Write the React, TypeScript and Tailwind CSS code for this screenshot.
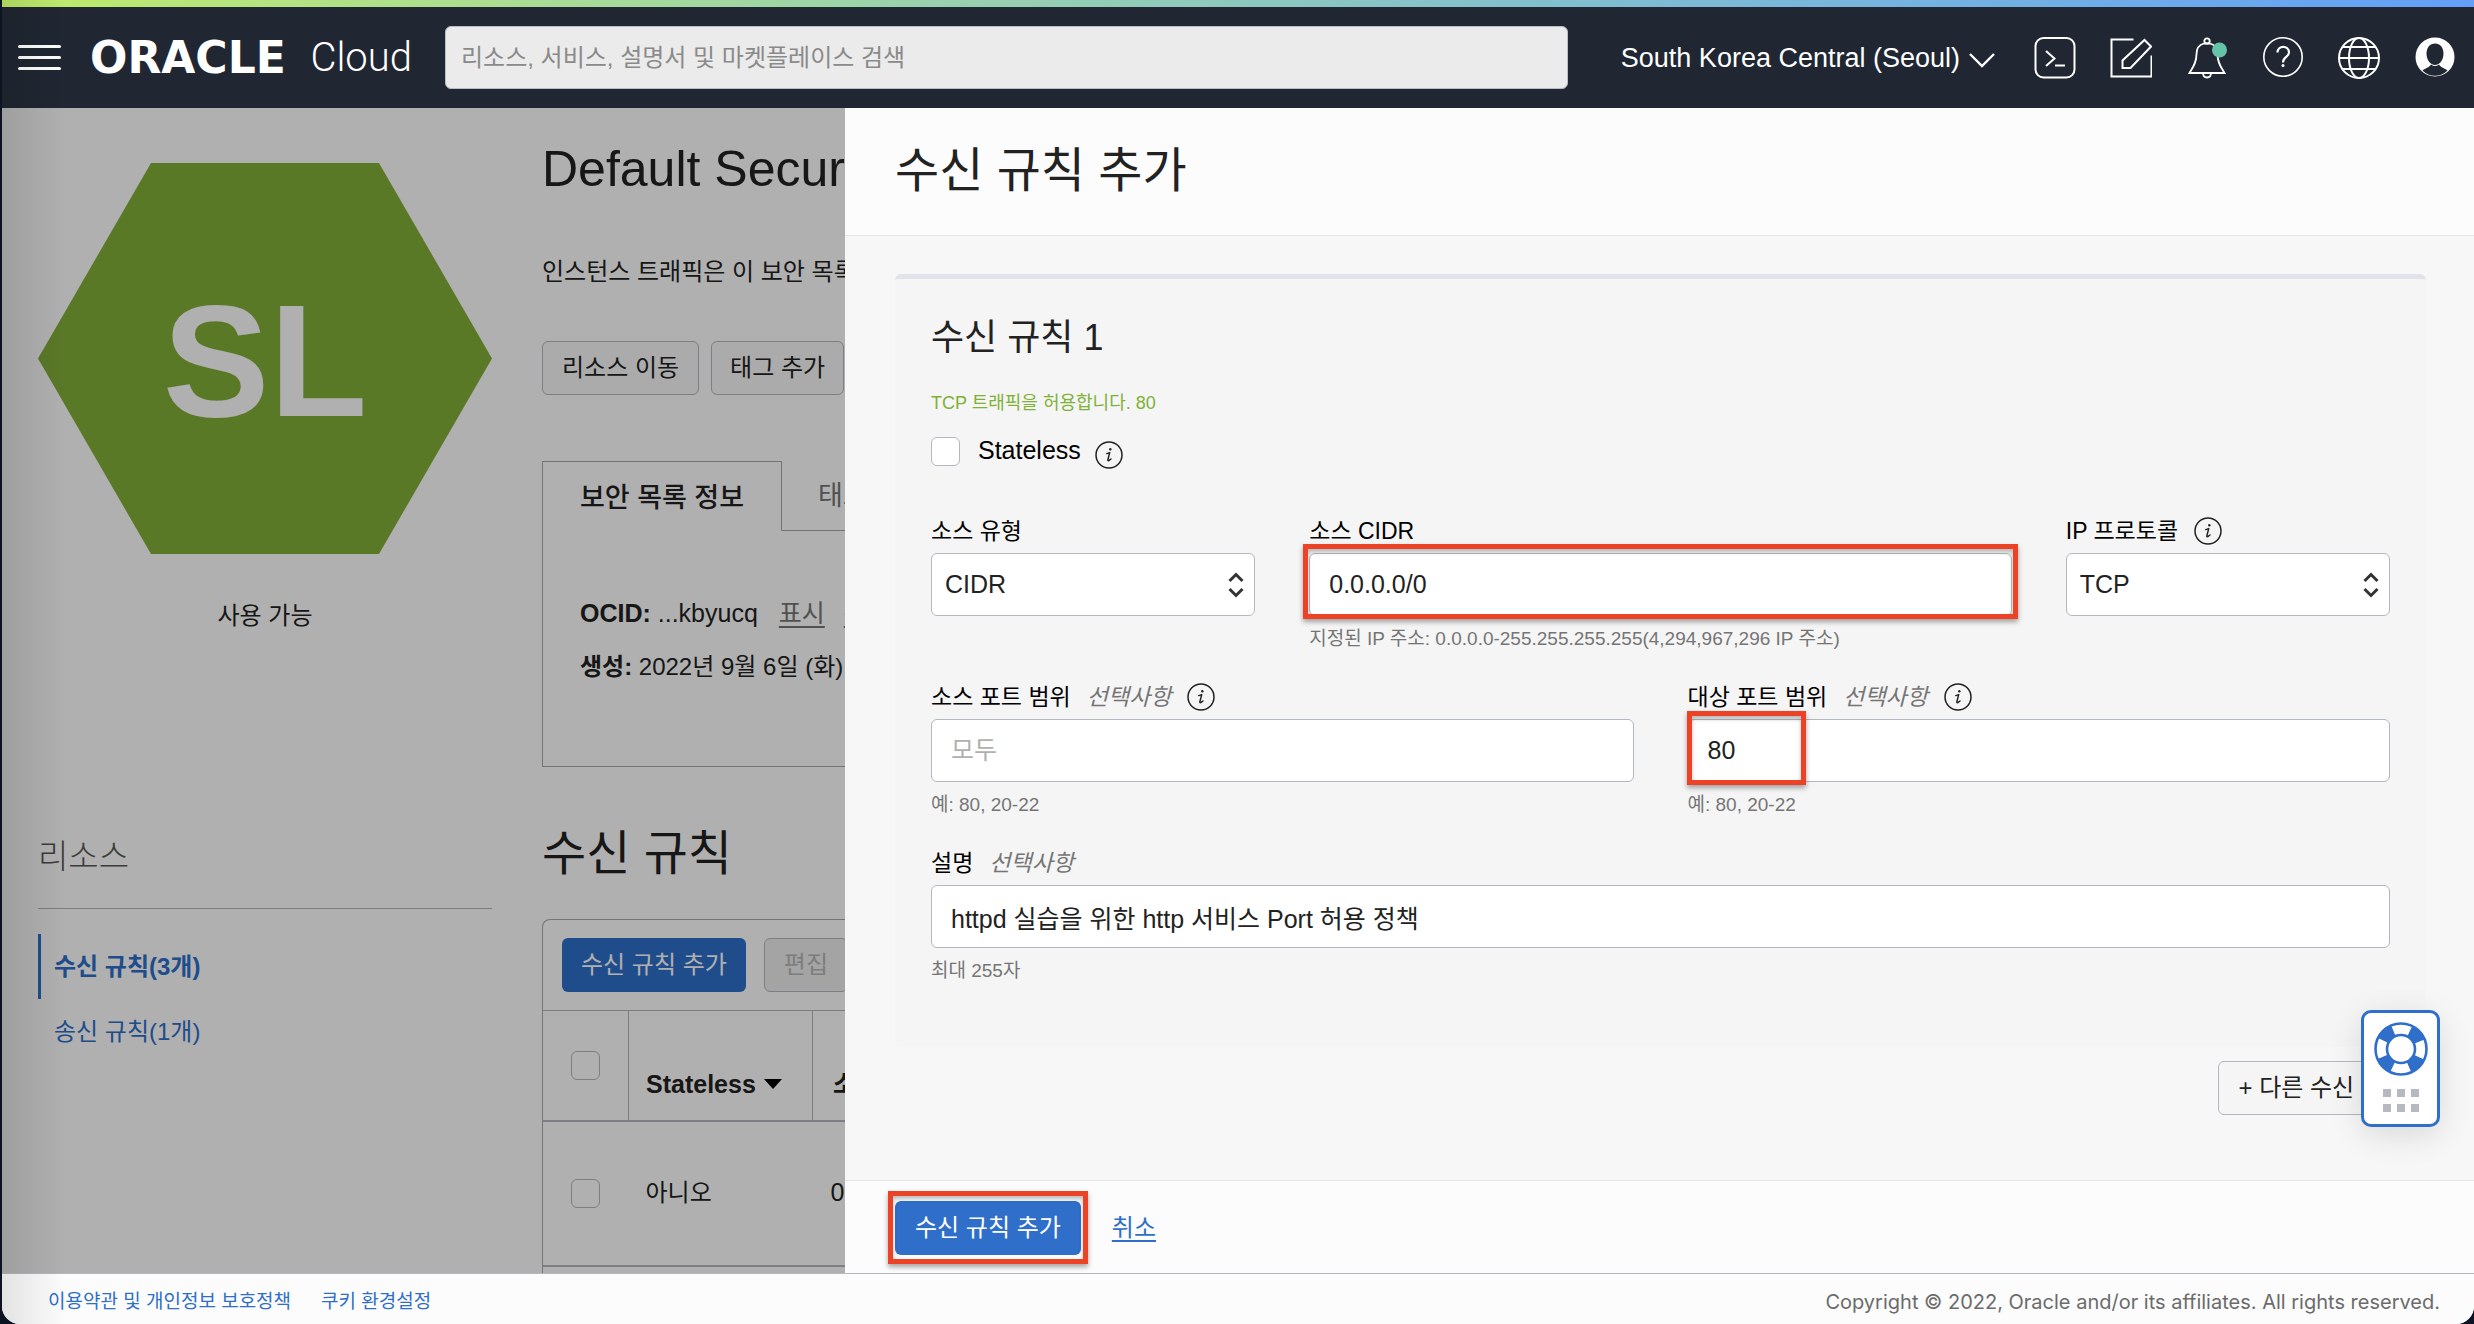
import React from "react";

function InfoButton({ label }: { label: string }) {
  return (
    <button type="button" aria-label={label} className="grid size-7 shrink-0 place-items-center rounded-full">
      <svg viewBox="0 0 28 28" className="size-7" fill="none" stroke="#222" aria-hidden="true">
        <circle cx="14" cy="14" r="13" strokeWidth="1.5" />
        <path d="M11.800 12.600 14.700 11.600 12.900 18.600Q12.600 20 13.800 19.600L16 18" strokeWidth="1.500" strokeLinecap="round" strokeLinejoin="round" />
        <circle cx="15.300" cy="8.200" r="1.200" fill="#222" stroke="none" />
      </svg>
    </button>
  );
}

function Highlight({ className }: { className: string }) {
  return (
    <span
      aria-hidden="true"
      className={
        "pointer-events-none absolute border-[5px] border-[#ec4226] shadow-[0_3px_5px_rgba(0,0,0,0.35),inset_0_3px_4px_rgba(0,0,0,0.25)] " +
        className
      }
    />
  );
}

function FieldLabel({ id, text, optional, info }: { id: string; text: string; optional?: boolean; info?: boolean }) {
  return (
    <div className="flex h-8 items-center gap-4 text-[23px] leading-8 whitespace-nowrap">
      <label htmlFor={id} className="flex gap-4 text-black">
        {text}
        {optional && <em className="text-[#757575]">선택사항</em>}
      </label>
      {info && <InfoButton label={text + " 정보"} />}
    </div>
  );
}

const inputClass =
  "h-[63px] w-full rounded-md border border-[#b3b7bf] bg-white px-[19px] text-[25px] text-[#222] placeholder:text-[#b0b0b0]";

function SelectBox({ id, value }: { id: string; value: string }) {
  return (
    <div className="relative mt-1.5">
      <select id={id} defaultValue={value} className="h-[63px] w-full appearance-none rounded-md border border-[#b3b7bf] bg-white px-[13px] text-[25px] text-[#222]">
        <option>{value}</option>
      </select>
      <svg viewBox="0 0 18 28" className="pointer-events-none absolute top-[18px] right-2.5 h-7 w-[18px]" fill="none" stroke="#333" strokeWidth="3" aria-hidden="true">
        <path d="M2.500 10 9 3.500l6.500 6.500M2.500 18l6.500 6.500 6.500-6.500" />
      </svg>
    </div>
  );
}

function Hint({ children }: { children: React.ReactNode }) {
  return <p className="mt-[11px] text-[19px] leading-6 whitespace-nowrap text-[#757575]">{children}</p>;
}

function Header() {
  return (
    <header>
      <div className="h-[7px] bg-linear-to-r from-[#bfea68] to-[#639ff7]" />
      <div className="flex h-[101px] items-center bg-[#202732] pr-[18px] pl-4 text-white">
        <button type="button" aria-label="메뉴" className="flex w-[43px] flex-col gap-2">
          <span className="h-[3px] rounded-full bg-white" />
          <span className="h-[3px] rounded-full bg-white" />
          <span className="h-[3px] rounded-full bg-white" />
        </button>
        <a href="#home" className="ml-[29px] flex w-[322px] items-center justify-between leading-[50px] whitespace-nowrap">
          <span className="font-['DejaVu_Sans'] text-[44px] font-bold">ORACLE</span>
          <span className="font-[Roboto] text-[40px] font-light">Cloud</span>
        </a>
        <input
          type="search"
          aria-label="검색"
          placeholder="리소스, 서비스, 설명서 및 마켓플레이스 검색"
          className="ml-[33px] h-[63px] min-w-0 flex-1 rounded-md border border-[#b9bdc4] bg-[#ebebeb] px-[15px] text-[24px] text-[#222] placeholder:text-[#8a8a8a]"
        />
        <button type="button" className="ml-[53px] flex items-center gap-2 text-[27px] leading-8 whitespace-nowrap">
          South Korea Central (Seoul)
          <svg viewBox="0 0 28 18" className="mt-1 h-[18px] w-7" fill="none" stroke="currentColor" strokeWidth="2.4" aria-hidden="true">
            <path d="m2 3 12 12L26 3" />
          </svg>
        </button>
        <div className="ml-[38px] flex gap-[34px]">
          <button type="button" aria-label="Cloud Shell">
            <svg viewBox="0 0 42 42" className="size-[42px]" fill="none" stroke="currentColor" strokeWidth="2">
              <rect x="1.500" y="1" width="39" height="39.500" rx="8" />
              <path d="m12 14 8.500 7.500L12 29M21 28.500h10" />
            </svg>
          </button>
          <button type="button" aria-label="편집">
            <svg viewBox="0 0 42 42" className="size-[42px]" fill="none" stroke="currentColor" strokeWidth="2">
              <path d="M23.500 2.500H1.500v37h40V18.500" />
              <path d="m34.500 3 6.500 6.500L20.500 31h-8v-7.500Z" />
            </svg>
          </button>
          <button type="button" aria-label="알림">
            <svg viewBox="0 0 42 42" className="size-[42px]" fill="none" stroke="currentColor" strokeWidth="1.800">
              <circle cx="21" cy="4" r="2.700" />
              <path d="M18 6.500C12.500 8 10.500 12 10.500 17c0 9-3.500 13-7 19h35c-3.500-6-7-10-7-19 0-5-2-9-7.500-10.500ZM17 36c0 6 8 6 8 0" />
              <circle cx="33.500" cy="13" r="7.500" fill="#65c3aa" stroke="none" />
            </svg>
          </button>
          <button type="button" aria-label="도움말">
            <svg viewBox="0 0 42 42" className="size-[42px]" fill="none" stroke="currentColor" strokeWidth="1.600">
              <circle cx="21" cy="20" r="19.200" />
              <path d="M15.500 15.500c0-7.500 11.500-7.500 11.500 0 0 4.500-6 4.500-6 10" strokeWidth="2.200" />
              <circle cx="21" cy="28.600" r="1.500" fill="currentColor" stroke="none" />
            </svg>
          </button>
          <button type="button" aria-label="언어">
            <svg viewBox="0 0 42 42" className="size-[42px]" fill="none" stroke="currentColor" strokeWidth="2">
              <circle cx="21" cy="21" r="20" />
              <ellipse cx="21" cy="21" rx="10" ry="20" />
              <path d="M1 21h40M4.500 10h33M4.500 32h33" />
            </svg>
          </button>
          <button type="button" aria-label="프로파일">
            <svg viewBox="0 0 42 42" className="size-[42px]" aria-hidden="true">
              <circle cx="21" cy="20" r="19.500" fill="#fff" />
              <path d="M21 6.500c5 0 8.500 4 8.500 10 0 7-4.500 11.500-8.500 11.500s-8.500-4.500-8.500-11.500c0-6 3.500-10 8.500-10Z" fill="#202732" />
              <path d="M8.500 33.500c2-2 6-2.500 8.500-6q4 3 8 0c2.500 3.500 6.500 4 8.500 6-6.500 7-18.500 7-25 0Z" fill="#202732" />
            </svg>
          </button>
        </div>
      </div>
    </header>
  );
}

function Sidebar() {
  return (
    <aside className="w-[454px] shrink-0">
      <svg viewBox="0 0 454 391" className="mt-[55px] w-full" role="img" aria-label="SL">
        <path d="M113 0h228l113 195.500L341 391H113L0 195.500Z" fill="#82ae39" />
        <text x="227" y="253" textAnchor="middle" fontSize="160" fontWeight="700" fill="#fcfcfc">
          SL
        </text>
      </svg>
      <p className="mt-[46px] text-center text-[24px] leading-8">사용 가능</p>
      <h2 className="mt-[201px] border-b border-[#b4b4b4] pb-[27px] text-[33px] leading-[48px] font-light text-[#555]">리소스</h2>
      <nav className="mt-[25px] text-[24px] leading-[65px] text-[#2d6ec8]">
        <a href="#ingress" className="block border-l-[3px] border-[#2d6ec8] pl-[13px] font-bold">
          수신 규칙(3개)
        </a>
        <a href="#egress" className="block pl-4">
          송신 규칙(1개)
        </a>
      </nav>
    </aside>
  );
}

const cellCheckbox = "block size-[29px] appearance-none rounded-md border border-[#b3b7bb]";

function Details() {
  return (
    <section className="flex flex-1 flex-col whitespace-nowrap">
      <h1 className="mt-[31px] text-[50px] leading-[60px]">Default Security</h1>
      <p className="mt-[57px] text-[24px] leading-8">인스턴스 트래픽은 이 보안 목록의</p>
      <div className="mt-[53px] flex gap-3 text-[24px]">
        <button type="button" className="h-[54px] rounded-md border border-[#b3b7bf] bg-[#f5f5f5] px-[19px]">
          리소스 이동
        </button>
        <button type="button" className="h-[54px] rounded-md border border-[#b3b7bf] bg-[#f5f5f5] px-[18px]">
          태그 추가
        </button>
      </div>

      <div className="mt-[66px] flex h-[70px] text-[27px] leading-[72px]" role="tablist">
        <button type="button" role="tab" aria-selected="true" className="border-x border-t border-[#a8a8a8] px-[37px] font-medium">
          보안 목록 정보
        </button>
        <button type="button" role="tab" aria-selected="false" className="flex-1 border-b border-[#a8a8a8] pl-9 text-left leading-[64px] text-[#757575]">
          태그
        </button>
      </div>
      <div className="flex h-[236px] flex-col gap-[22px] border-b border-l border-[#a8a8a8] pt-[66px] pl-[37px] text-[25px] leading-8">
        <p>
          <b>OCID:</b> ...kbyucq{" "}
          <a href="#show" className="ml-3.5 text-[#757575] underline underline-offset-4">
            표시
          </a>{" "}
          <a href="#copy" className="ml-3 text-[#757575] underline underline-offset-4">
            복사
          </a>
        </p>
        <p className="text-[24px]">
          <b>생성:</b> 2022년 9월 6일 (화)
        </p>
      </div>

      <h2 className="mt-[57px] text-[48px] leading-[60px]">수신 규칙</h2>
      <div className="mt-[35px] flex-1 rounded-tl-lg border-t border-l border-[#a8a8a8]">
        <div className="flex gap-[18px] px-[19px] py-[18px] text-[24px]">
          <button type="button" className="h-[54px] rounded-md bg-[#2d6ec8] px-[19px] text-[#fcfcfc]">
            수신 규칙 추가
          </button>
          <button type="button" disabled className="h-[54px] rounded-md border border-[#b3b7bf] bg-[#ebebeb] px-[19px] text-[#b4b4b4]">
            편집
          </button>
        </div>
        <table className="w-[640px] border-collapse text-left text-[25px]">
          <thead>
            <tr className="h-[110px] border-t border-b-2 border-t-[#b3b3b3] border-b-[#b3b7bf]">
              <th className="w-[85px] border-r border-[#b3b3b3] px-7">
                <input type="checkbox" aria-label="모두 선택" className={cellCheckbox} />
              </th>
              <th className="w-[184px] border-r border-[#b3b3b3] pt-[38px] pl-[17px]">
                <span className="flex items-center gap-2">
                  Stateless
                  <svg viewBox="0 0 18 10" className="h-2.5 w-[18px]" aria-hidden="true">
                    <path d="M0 0h18L9 10Z" />
                  </svg>
                </span>
              </th>
              <th className="pt-[38px] pl-5">소스</th>
            </tr>
          </thead>
          <tbody>
            <tr className="h-[145px] border-b-2 border-[#b3b7bf]">
              <td className="px-7">
                <input type="checkbox" aria-label="행 선택" className={cellCheckbox} />
              </td>
              <td className="pl-[17px] text-[24px]">아니오</td>
              <td className="pl-[18px]">0.0.0.0/0</td>
            </tr>
          </tbody>
        </table>
      </div>
    </section>
  );
}

function RulePanel() {
  return (
    <section aria-label="수신 규칙 추가" className="relative flex min-w-0 flex-col bg-[#f7f7f7]">
      <header className="border-b border-[#e5e5e5] bg-[#fcfcfc] px-[50px] pt-[33px] pb-[34px]">
        <h2 className="text-[48px] leading-[60px]">수신 규칙 추가</h2>
      </header>

      <div className="flex-1 pt-[38px] pr-12 pb-[60px] pl-[50px]">
        <div className="rounded-md border-t-[5px] border-[#e1e3e8] bg-[#f5f5f5] px-9 pt-[33px] pb-[64px]">
          <h3 className="text-[36px] leading-[52px]">수신 규칙 1</h3>
          <p className="mt-[27px] text-[18px] leading-6 text-[#7fb135]">TCP 트래픽을 허용합니다. 80</p>
          <div className="mt-[18px] flex h-9 items-center">
            <input id="stateless" type="checkbox" className="size-[29px] appearance-none rounded-md border border-[#b3b7bf] bg-white" />
            <label htmlFor="stateless" className="ml-[18px] text-[25px] text-black">
              Stateless
            </label>
            <span className="mt-2 ml-3.5 flex">
              <InfoButton label="Stateless 정보" />
            </span>
          </div>

          <div className="mt-[46px] grid grid-cols-4 gap-x-[54px] gap-y-[30px]">
            <div>
              <FieldLabel id="source-type" text="소스 유형" />
              <SelectBox id="source-type" value="CIDR" />
            </div>
            <div className="col-span-2">
              <FieldLabel id="source-cidr" text="소스 CIDR" />
              <div className="relative mt-1.5">
                <input id="source-cidr" defaultValue="0.0.0.0/0" className={inputClass} />
                <Highlight className="-inset-x-1.5 -top-[9px] -bottom-[3px]" />
              </div>
              <Hint>지정된 IP 주소: 0.0.0.0-255.255.255.255(4,294,967,296 IP 주소)</Hint>
            </div>
            <div>
              <FieldLabel id="protocol" text="IP 프로토콜" info />
              <SelectBox id="protocol" value="TCP" />
            </div>

            <div className="col-span-2">
              <FieldLabel id="source-port" text="소스 포트 범위" optional info />
              <div className="mt-1.5">
                <input id="source-port" placeholder="모두" className={inputClass} />
              </div>
              <Hint>예: 80, 20-22</Hint>
            </div>
            <div className="col-span-2">
              <FieldLabel id="target-port" text="대상 포트 범위" optional info />
              <div className="relative mt-1.5">
                <input id="target-port" defaultValue="80" className={inputClass} />
                <Highlight className="-top-2 -left-px h-[74px] w-[119px]" />
              </div>
              <Hint>예: 80, 20-22</Hint>
            </div>

            <div className="col-span-4">
              <FieldLabel id="description" text="설명" optional />
              <div className="mt-1.5">
                <input id="description" defaultValue="httpd 실습을 위한 http 서비스 Port 허용 정책" className={inputClass} />
              </div>
              <Hint>최대 255자</Hint>
            </div>
          </div>
        </div>

        <div className="mt-[14px] flex justify-end">
          <button type="button" className="h-[54px] rounded-md border border-[#b3b7bf] bg-[#f5f5f5] px-5 text-[24px] whitespace-nowrap">
            + 다른 수신 규칙
          </button>
        </div>
      </div>

      <footer className="flex items-center gap-[31px] border-t border-[#e5e5e5] bg-[#fcfcfc] px-[50px] pt-5 pb-[18px] text-[24px]">
        <div className="relative">
          <button type="button" className="h-[54px] rounded-md bg-[#2f6fc9] px-5 text-white">
            수신 규칙 추가
          </button>
          <Highlight className="-inset-x-[7px] -top-[10px] -bottom-[9px]" />
        </div>
        <a href="#cancel" className="text-[#2f6fc9] underline underline-offset-4">
          취소
        </a>
      </footer>

      <button
        type="button"
        aria-label="지원"
        className="absolute right-[34px] bottom-[146px] flex h-[117px] w-[79px] flex-col items-center rounded-[10px] border-[3px] border-[#2f6fc9] bg-white pt-[9px] shadow-[0_8px_32px_rgba(0,0,0,0.12)]"
      >
        <svg viewBox="0 0 54 54" className="size-[54px]" fill="none" stroke="#2f6fc9" aria-hidden="true">
          <circle cx="27" cy="27" r="20" strokeWidth="12" strokeDasharray="14.400 17.016" strokeDashoffset="-8.508" />
          <circle cx="27" cy="27" r="25.500" strokeWidth="2.600" />
          <circle cx="27" cy="27" r="14" strokeWidth="2.600" />
        </svg>
        <span className="mt-[13px] grid grid-cols-3 gap-x-1.5 gap-y-[7px]">
          {[0, 1, 2, 3, 4, 5].map((dot) => (
            <span key={dot} className="size-2 bg-[#b6bac0]" />
          ))}
        </span>
      </button>
    </section>
  );
}

export default function App() {
  return (
    <div className="min-h-screen bg-[#0b1420] pl-0.5 font-['Liberation_Sans','Noto_Sans_CJK_KR',sans-serif] text-[#222]">
      <div className="relative flex min-h-screen flex-col overflow-hidden rounded-b-[18px] bg-[#fcfcfc]">
        <Header />
        <main className="grid flex-1 grid-cols-[843px_minmax(0,1fr)]">
          <div className="relative flex gap-[50px] overflow-hidden bg-[#fcfcfc] pl-9">
            <Sidebar />
            <Details />
            <div className="pointer-events-none absolute inset-0 bg-black/30" />
          </div>
          <RulePanel />
        </main>
        <footer className="flex h-[51px] items-center justify-between border-t border-[#b3b7bf] bg-[#fcfcfc] pt-1.5 pr-[34px] pl-[46px] whitespace-nowrap">
          <nav className="flex gap-[30px] text-[19px] text-[#2f6fc9]">
            <a href="#terms">이용약관 및 개인정보 보호정책</a>
            <a href="#cookies">쿠키 환경설정</a>
          </nav>
          <p className="font-[Inter] text-[20px] text-[#6b6b6b]">Copyright © 2022, Oracle and/or its affiliates. All rights reserved.</p>
        </footer>
        <div className="pointer-events-none absolute inset-y-0 left-0 w-16 bg-linear-to-r from-black/10 to-transparent" />
      </div>
    </div>
  );
}
